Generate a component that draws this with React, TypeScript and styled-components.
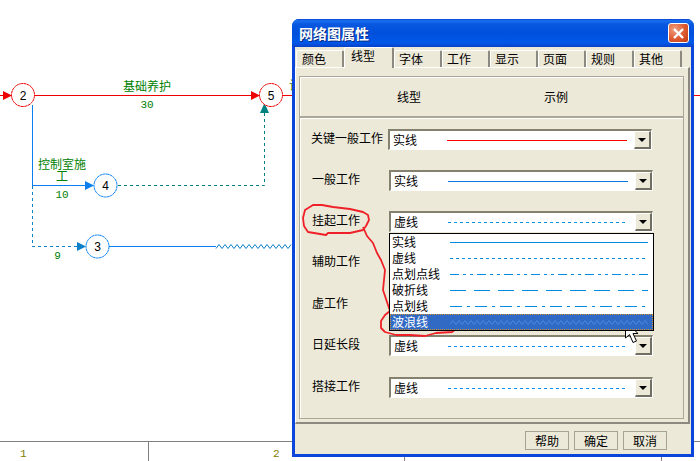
import styled, { createGlobalStyle } from "styled-components";

const FONT = `"Noto Sans CJK SC", "Liberation Sans", sans-serif`;

const GlobalStyle = createGlobalStyle`
  html, body {
    margin: 0;
    padding: 0;
    background: #fff;
    font-family: ${FONT};
    font-size: 12px;
  }
`;

const Stage = styled.div`
  position: relative;
  width: 700px;
  height: 461px;
  overflow: hidden;
  display: flex;
  flex-direction: column;
  justify-content: flex-end;
`;

/* ---------- network diagram behind the dialog ---------- */

const DiagramCanvas = styled.svg`
  position: absolute;
  left: 0;
  top: 0;
`;

const GreenText = styled.text`
  font-family: ${FONT};
  font-size: 12px;
  fill: #008000;
  text-anchor: middle;
`;

const GreenDigits = styled.text`
  font-family: "Liberation Mono", monospace;
  font-size: 11px;
  fill: #008000;
  text-anchor: middle;
`;

const NodeDigit = styled.text`
  font-family: "Liberation Sans", sans-serif;
  font-size: 12px;
  fill: #000;
  text-anchor: middle;
`;

const RED = "#f00000";
const BLUE = "#0a80f0";
const DASHBLUE = "#0a80c8";
const TEAL = "#008080";

function wavePoints(x0: number, x1: number, y: number) {
  const pts: string[] = [];
  let up = true;
  for (let x = x0; x <= x1; x += 3) {
    pts.push(`${x},${up ? y + 2 : y - 2}`);
    up = !up;
  }
  return pts.join(" ");
}

function Node({ x, y, n, color }: { x: number; y: number; n: number; color: string }) {
  return (
    <g>
      <circle cx={x} cy={y} r={11.5} fill="#fff" stroke={color} strokeWidth={1} strokeDasharray="3 0.4" />
      <NodeDigit x={x} y={y + 4.5}>{n}</NodeDigit>
    </g>
  );
}

function Diagram() {
  return (
    <DiagramCanvas width={700} height={461} viewBox="0 0 700 461">
      <line x1={0} y1={95.5} x2={700} y2={95.5} stroke={RED} />
      <path d="M3 91 L12 95.5 L3 100 Z" fill={RED} />
      <path d="M251 91 L260 95.5 L251 100 Z" fill={RED} />

      <line x1={32.5} y1={105} x2={32.5} y2={185} stroke={BLUE} />
      <line x1={32} y1={185.5} x2={88} y2={185.5} stroke={BLUE} />
      <path d="M85 181 L94 185.5 L85 190 Z" fill={BLUE} />

      <line x1={32.5} y1={186} x2={32.5} y2={246} stroke={DASHBLUE} strokeDasharray="3 3" />
      <line x1={32} y1={246.5} x2={78} y2={246.5} stroke={DASHBLUE} strokeDasharray="3 3" />
      <path d="M77 242 L86 246.5 L77 251 Z" fill={DASHBLUE} />
      <line x1={109} y1={246.5} x2={216} y2={246.5} stroke={BLUE} />
      <polyline points={wavePoints(216, 292, 246.5)} fill="none" stroke={DASHBLUE} />

      <path d="M118 185.5 H264.5 V112" fill="none" stroke={TEAL} strokeDasharray="3 3" />
      <path d="M260 113 L264.5 103 L269 113 Z" fill={TEAL} />

      <Node x={23} y={95} n={2} color={RED} />
      <Node x={271} y={95} n={5} color={RED} />
      <Node x={105.5} y={185.5} n={4} color={BLUE} />
      <Node x={97.5} y={246.5} n={3} color={BLUE} />

      <GreenText x={147} y={91}>基础养护</GreenText>
      <GreenDigits x={147} y={108}>30</GreenDigits>
      <GreenText x={62} y={169}>控制室施</GreenText>
      <GreenText x={62} y={181}>工</GreenText>
      <GreenDigits x={62} y={198}>10</GreenDigits>
      <GreenDigits x={57.5} y={259}>9</GreenDigits>
      <GreenText x={295} y={90}>计</GreenText>
    </DiagramCanvas>
  );
}

/* ---------- time ruler along the bottom ---------- */

const Ruler = styled.div`
  position: relative;
  display: flex;
  flex-shrink: 0;
  margin-left: -108px;
  height: 19px;
  border-top: 1px solid #808080;
`;

const RulerCell = styled.div<{ $pad?: number }>`
  flex: 0 0 256.5px;
  box-sizing: border-box;
  padding-left: ${(p) => p.$pad ?? 0}px;
  border-right: 1px solid #808080;
  text-align: center;
  color: #808000;
  font-family: "Liberation Mono", monospace;
  font-size: 11px;
  line-height: 24px;
`;

/* ---------- XP style dialog ---------- */

const Dialog = styled.div`
  position: absolute;
  left: 292px;
  top: 19px;
  width: 402px;
  height: 438px;
  box-sizing: border-box;
  padding: 0 3px 3px;
  display: flex;
  flex-direction: column;
  background: #0a46dc;
  border-radius: 7px 7px 0 0;
`;

const TitleBar = styled.div`
  flex: 0 0 28px;
  margin: 0 -3px;
  padding: 0 5px 0 7px;
  display: flex;
  align-items: center;
  justify-content: space-between;
  border-radius: 7px 7px 0 0;
  background: linear-gradient(
    to bottom,
    #0a3fd0 0,
    #1a70f0 6%,
    #0a58e0 18%,
    #0050dc 50%,
    #0058e8 85%,
    #0a40c8 100%
  );
`;

const TitleText = styled.div`
  color: #fff;
  font-size: 14px;
  font-weight: 700;
  text-shadow: 1px 1px 0 #0a2a80;
`;

const CloseButton = styled.div`
  width: 21px;
  height: 20px;
  box-sizing: border-box;
  border: 1px solid #fff;
  border-radius: 3px;
  display: flex;
  align-items: center;
  justify-content: center;
  background: radial-gradient(circle at 30% 30%, #f0a080, #dd5a30 55%, #c03a14);
`;

const DialogBody = styled.div`
  flex: 1;
  display: flex;
  flex-direction: column;
  background: #ece9d8;
`;

const TabStrip = styled.div`
  flex: 0 0 20px;
  display: flex;
  align-items: flex-end;
  padding-left: 1px;
  position: relative;
  z-index: 1;
`;

const Tab = styled.div<{ $active?: boolean; $pad: number }>`
  box-sizing: border-box;
  width: ${(p) => (p.$active ? 50 : 48)}px;
  height: ${(p) => (p.$active ? 21 : 17)}px;
  margin-bottom: ${(p) => (p.$active ? -1 : 0)}px;
  padding-left: ${(p) => p.$pad}px;
  line-height: 16px;
  color: #000;
  background: #ece9d8;
  border-top: 1px solid #fff;
  border-left: 1px solid #fff;
  border-right: 2px solid #8c8a80;
  border-radius: 2px 2px 0 0;
`;

const TabPanel = styled.div`
  flex: 0 0 352px;
  box-sizing: border-box;
  margin-right: 1px;
  padding: 8px 4px 3px 3px;
  display: flex;
  flex-direction: column;
  background: #ece9d8;
  border-top: 1px solid #fff;
  border-left: 1px solid #fff;
  border-right: 2px solid #8c8a80;
  border-bottom: 2px solid #8c8a80;
`;

const GroupBox = styled.div`
  box-sizing: border-box;
  border: 1px solid #aca899;
  box-shadow: inset 1px 1px 0 #fff;
`;

const HeaderBox = styled(GroupBox)`
  flex: 0 0 41px;
  display: flex;
  align-items: center;
`;

const HeaderCell = styled.div<{ $width: number }>`
  width: ${(p) => p.$width}px;
  text-align: center;
  margin-top: -1px;
`;

const ListBox = styled(GroupBox)`
  flex: 1;
  padding: 11px 0 0 12px;
  position: relative;
`;

const Row = styled.div<{ $nudge?: boolean; $height: number }>`
  display: grid;
  grid-template-columns: 77px 264px;
  height: ${(p) => p.$height}px;
  margin-left: ${(p) => (p.$nudge ? -1 : 0)}px;
  align-items: start;
`;

const RowLabel = styled.div`
  line-height: 18px;
  white-space: nowrap;
`;

const Combo = styled.div`
  position: relative;
  height: 21px;
  box-sizing: border-box;
  display: flex;
  align-items: center;
  background: #fff;
  border-top: 2px solid #85816f;
  border-left: 2px solid #85816f;
  border-right: 1px solid #fff;
  border-bottom: 1px solid #fff;
`;

const ComboText = styled.div`
  width: 57px;
  padding-left: 3px;
  box-sizing: border-box;
  flex-shrink: 0;
  line-height: 16px;
`;

const ComboArrow = styled.div`
  margin-left: auto;
  width: 17px;
  height: 18px;
  box-sizing: border-box;
  background: #ece9d8;
  border-top: 1px solid #fff;
  border-left: 1px solid #fff;
  border-right: 2px solid #716f64;
  border-bottom: 2px solid #716f64;
  display: flex;
  align-items: center;
  justify-content: center;

  &::after {
    content: "";
    border-top: 4px solid #000;
    border-left: 4px solid transparent;
    border-right: 4px solid transparent;
  }
`;

const DropList = styled.div`
  position: absolute;
  left: -2px;
  top: 20px;
  z-index: 2;
  width: 265px;
  box-sizing: border-box;
  background: #fff;
  border: 1px solid #000;
`;

const DropItem = styled.div<{ $selected?: boolean }>`
  height: 16px;
  box-sizing: border-box;
  display: flex;
  align-items: center;
  line-height: 16px;
  padding-left: 2px;
  color: ${(p) => (p.$selected ? "#fff" : "#000")};
  background: ${(p) => (p.$selected ? "#316ac5" : "transparent")};
  outline: ${(p) => (p.$selected ? "1px dotted #d09030" : "none")};
  outline-offset: -1px;
`;

const DropText = styled.div`
  width: 58px;
  flex-shrink: 0;
  white-space: nowrap;
  overflow: hidden;
`;

const SampleSvg = styled.svg`
  display: block;
  flex-shrink: 0;
`;

const Footer = styled.div`
  flex: 1;
  display: flex;
  justify-content: flex-end;
  gap: 5px;
  padding: 7px 24px 0 0;
`;

const PushButton = styled.div`
  width: 44px;
  height: 19px;
  box-sizing: border-box;
  border: 1px solid #a8a294;
  background: #ece9d8;
  text-align: center;
  line-height: 17px;
`;

const Overlay = styled.svg`
  position: absolute;
  left: 0;
  top: 0;
  pointer-events: none;
`;

const Scribble = styled.path`
  fill: none;
  stroke: #f02028;
  stroke-width: 1.8;
  stroke-linejoin: round;
`;

function Sample({
  width,
  color,
  dash,
  wave,
}: {
  width: number;
  color: string;
  dash?: string;
  wave?: boolean;
}) {
  return (
    <SampleSvg width={width} height={7} viewBox={`0 0 ${width} 7`} shapeRendering={wave ? undefined : "crispEdges"}>
      {wave ? (
        <polyline points={wavePoints(0, width, 3.5)} fill="none" stroke={color} />
      ) : (
        <line x1={0} y1={3.5} x2={width} y2={3.5} stroke={color} strokeDasharray={dash} />
      )}
    </SampleSvg>
  );
}

const DROP_BLUE = "#008ce0";
const dropItems = [
  { text: "实线" },
  { text: "虚线", dash: "3 3" },
  { text: "点划点线", dash: "9 4 3 4 3 4" },
  { text: "破折线", dash: "16 8" },
  { text: "点划线", dash: "12 5 3 5" },
];

const rows = [
  { label: "关键一般工作", text: "实线", color: "#ff0000", nudge: true, height: 41 },
  { label: "一般工作", text: "实线", color: "#0a78dc", height: 41 },
  { label: "挂起工作", text: "虚线", color: "#0094e0", dash: "3 3", open: true, height: 41 },
  // the next two combos lie fully under the open list
  { label: "辅助工作", text: "", color: "#0094e0", dash: "3 3", height: 42 },
  { label: "虚工作", text: "", color: "#0094e0", dash: "3 3", height: 41 },
  { label: "日延长段", text: "虚线", color: "#0090ff", dash: "3 3", height: 42 },
  { label: "搭接工作", text: "虚线", color: "#0090ff", dash: "3 3", height: 41 },
];

const tabs = [
  { text: "颜色", pad: 5 },
  { text: "线型", pad: 6, active: true },
  { text: "字体", pad: 4 },
  { text: "工作", pad: 4 },
  { text: "显示", pad: 4 },
  { text: "页面", pad: 4 },
  { text: "规则", pad: 4 },
  { text: "其他", pad: 4 },
];

function App() {
  return (
    <Stage>
      <GlobalStyle />
      <Diagram />
      <Ruler>
        <RulerCell $pad={7}>1</RulerCell>
        <RulerCell>2</RulerCell>
        <RulerCell>3</RulerCell>
        <RulerCell />
      </Ruler>

      <Dialog>
        <TitleBar>
          <TitleText>网络图属性</TitleText>
          <CloseButton>
            <svg width="13" height="13" viewBox="0 0 13 13">
              <path d="M2 2 L11 11 M11 2 L2 11" stroke="#fff" strokeWidth="2.4" />
            </svg>
          </CloseButton>
        </TitleBar>
        <DialogBody>
          <TabStrip>
            {tabs.map((t) => (
              <Tab key={t.text} $active={t.active} $pad={t.pad}>
                {t.text}
              </Tab>
            ))}
          </TabStrip>
          <TabPanel>
            <HeaderBox>
              <HeaderCell $width={218}>线型</HeaderCell>
              <HeaderCell $width={76}>示例</HeaderCell>
            </HeaderBox>
            <ListBox>
              {rows.map((r) => (
                <Row key={r.label} $nudge={r.nudge} $height={r.height}>
                  <RowLabel>{r.label}</RowLabel>
                  <Combo>
                    <ComboText>{r.text}</ComboText>
                    <Sample width={r.dash ? 178 : 180} color={r.color} dash={r.dash} />
                    <ComboArrow />
                    {r.open && (
                      <DropList>
                        {dropItems.map((d) => (
                          <DropItem key={d.text}>
                            <DropText>{d.text}</DropText>
                            <Sample width={198} color={DROP_BLUE} dash={d.dash} />
                          </DropItem>
                        ))}
                        <DropItem $selected>
                          <DropText>波浪线</DropText>
                          <Sample width={198} color="#4a8ae0" wave />
                        </DropItem>
                      </DropList>
                    )}
                  </Combo>
                </Row>
              ))}
            </ListBox>
          </TabPanel>
          <Footer>
            <PushButton>帮助</PushButton>
            <PushButton>确定</PushButton>
            <PushButton>取消</PushButton>
          </Footer>
        </DialogBody>
      </Dialog>

      {/* hand drawn red marks and the mouse pointer lie over the dialog */}
      <Overlay width={700} height={461} viewBox="0 0 700 461">
        <Scribble d="M313 205 L322 205 L333 207 L350 209 L363 212 L368 215 L369 220 L366 226 L363 230 L350 233 L328 233 L326 235 L314 233 L308 232 L304 226 L303 218 L305 210 Z" />
        <Scribble d="M363 227 L367 236 L373 243 L377 253 L381 260 L385 270 L384 280 L383 290 L387 302 L390 311" />
        <Scribble d="M390 311 L400 308 L408 310 L416 315 L424 317 L445 316 L455 317 L459 322 L459 327 L452 332 L436 333 L425 336 L410 335 L396 335 L385 332 L381 328 L381 321 L385 315 Z" />
        <path
          d="M625.5 321.5 L625.5 338 L629.5 334.5 L633 342.5 L636.5 341 L633 333.5 L638 333.5 Z"
          fill="#fff"
          stroke="#000"
          strokeWidth="1"
        />
      </Overlay>
    </Stage>
  );
}

export default App;
